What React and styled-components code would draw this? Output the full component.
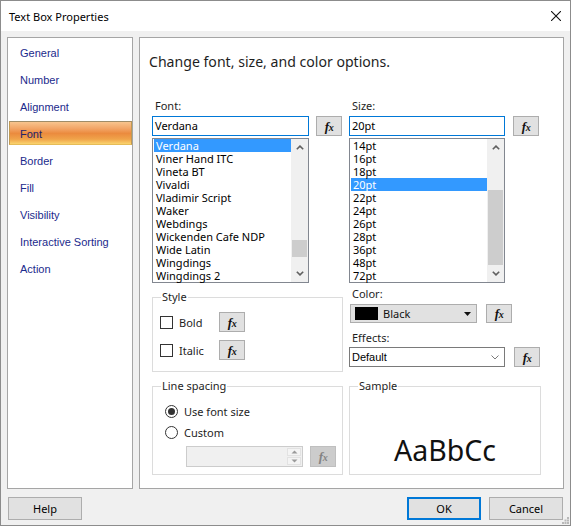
import React from "react"
import styled, { createGlobalStyle, css } from "styled-components"

const UI = `"Noto Sans", "Open Sans", sans-serif`
const CLASSIC = `"Liberation Sans", Arial, sans-serif`

const fontNames = [
  "Verdana",
  "Viner Hand ITC",
  "Vineta BT",
  "Vivaldi",
  "Vladimir Script",
  "Waker",
  "Webdings",
  "Wickenden Cafe NDP",
  "Wide Latin",
  "Wingdings",
  "Wingdings 2",
]

const sizes = ["14pt", "16pt", "18pt", "20pt", "22pt", "24pt", "26pt", "28pt", "36pt", "48pt", "72pt"]

const pages = ["General", "Number", "Alignment", "Font", "Border", "Fill", "Visibility", "Interactive Sorting", "Action"]

const Fx = ({ disabled, height }) => (
  <FxButton $disabled={disabled} $h={height}>
    <FxGlyph>
      f<small>x</small>
    </FxGlyph>
  </FxButton>
)

const Chevron = ({ up }) => (
  <svg width="8" height="5" viewBox="0 0 8 5">
    <path
      d={up ? "M0.8 4.3 L4 1.1 L7.2 4.3" : "M0.8 0.7 L4 3.9 L7.2 0.7"}
      fill="none"
      stroke="#606060"
      strokeWidth="1.6"
    />
  </svg>
)

const ScrollBar = ({ thumbTop, thumbHeight }) => (
  <Scroll>
    <ScrollArrow>
      <Chevron up />
    </ScrollArrow>
    <Track>
      <Thumb $top={thumbTop} $height={thumbHeight} />
    </Track>
    <ScrollArrow>
      <Chevron />
    </ScrollArrow>
  </Scroll>
)

const List = ({ items, selected, width, thumbTop, thumbHeight }) => (
  <ListBox $w={width}>
    <ListItems>
      {items.map((item) => (
        <ListItem key={item} $selected={item === selected}>
          {item}
        </ListItem>
      ))}
    </ListItems>
    <ScrollBar thumbTop={thumbTop} thumbHeight={thumbHeight} />
  </ListBox>
)

const App = () => {
  return (
    <>
      <GlobalStyle />
      <Window>
        <TitleBar>
          <span>Text Box Properties</span>
          <svg width="10" height="10" viewBox="0 0 10 10">
            <path d="M0 0 L10 10 M10 0 L0 10" stroke="#111" strokeWidth="1.1" />
          </svg>
        </TitleBar>
        <Body>
          <Main>
            <Nav>
              {pages.map((page) => (
                <NavItem key={page} $active={page === "Font"}>
                  {page}
                </NavItem>
              ))}
            </Nav>
            <Content>
              <Heading>Change font, size, and color options.</Heading>
              <Columns>
                <Column>
                  <Label>Font:</Label>
                  <FieldRow $gap={7}>
                    <TextBox $w={157}>Verdana</TextBox>
                    <Fx />
                  </FieldRow>
                  <List items={fontNames} selected="Verdana" width={157} thumbTop={84} thumbHeight={17} />

                  <Group $mt={7}>
                    <Legend>Style</Legend>
                    <StyleBody>
                      <CheckRow>
                        <CheckBox />
                        <span>Bold</span>
                        <Fx />
                      </CheckRow>
                      <CheckRow>
                        <CheckBox />
                        <span>Italic</span>
                        <Fx />
                      </CheckRow>
                    </StyleBody>
                  </Group>

                  <Group $mt={7}>
                    <Legend>Line spacing</Legend>
                    <SpacingBody>
                      <RadioRow>
                        <Radio $checked />
                        <span>Use font size</span>
                      </RadioRow>
                      <RadioRow>
                        <Radio />
                        <span>Custom</span>
                      </RadioRow>
                      <SpinRow>
                        <SpinBox>
                          <SpinButtons>
                            <SpinHalf>
                              <svg width="7" height="4" viewBox="0 0 7 4">
                                <path d="M0.5 3.5 L3.5 0.5 L6.5 3.5 Z" fill="#9a9a9a" />
                              </svg>
                            </SpinHalf>
                            <SpinHalf>
                              <svg width="7" height="4" viewBox="0 0 7 4">
                                <path d="M0.5 0.5 L3.5 3.5 L6.5 0.5 Z" fill="#9a9a9a" />
                              </svg>
                            </SpinHalf>
                          </SpinButtons>
                        </SpinBox>
                        <Fx disabled height={21} />
                      </SpinRow>
                    </SpacingBody>
                  </Group>
                </Column>

                <Column>
                  <Label>Size:</Label>
                  <FieldRow $gap={8}>
                    <TextBox $w={156}>20pt</TextBox>
                    <Fx />
                  </FieldRow>
                  <List items={sizes} selected="20pt" width={156} thumbTop={34} thumbHeight={75} />

                  <Label $mt={4}>Color:</Label>
                  <FieldRow $gap={9} $indent={1}>
                    <ColorSelect>
                      <Swatch />
                      <SelectText>Black</SelectText>
                      <svg width="7" height="4" viewBox="0 0 7 4">
                        <path d="M0 0 L7 0 L3.5 4 Z" fill="#111" />
                      </svg>
                    </ColorSelect>
                    <Fx height={19} />
                  </FieldRow>

                  <Label $mt={8} $mb={2}>Effects:</Label>
                  <FieldRow $gap={9}>
                    <ComboBox>
                      <ComboText>Default</ComboText>
                      <svg width="8" height="5" viewBox="0 0 8 5">
                        <path d="M0.5 0.5 L4 4 L7.5 0.5" fill="none" stroke="#7a7a7a" strokeWidth="1" />
                      </svg>
                    </ComboBox>
                    <Fx />
                  </FieldRow>

                  <Group $mt={12}>
                    <Legend>Sample</Legend>
                    <SampleBody>
                      <SampleText>AaBbCc</SampleText>
                    </SampleBody>
                  </Group>
                </Column>
              </Columns>
            </Content>
          </Main>
          <Footer>
            <Button>Help</Button>
            <Spacer />
            <Button $default>OK</Button>
            <Button>Cancel</Button>
          </Footer>
        </Body>
        <Grip width="7" height="7" viewBox="0 0 7 7">
          <rect x="5" y="0" width="2" height="2" fill="#b8b8b8" />
          <rect x="2.5" y="2.5" width="2" height="2" fill="#b8b8b8" />
          <rect x="5" y="2.5" width="2" height="2" fill="#b8b8b8" />
          <rect x="0" y="5" width="2" height="2" fill="#b8b8b8" />
          <rect x="2.5" y="5" width="2" height="2" fill="#b8b8b8" />
          <rect x="5" y="5" width="2" height="2" fill="#b8b8b8" />
        </Grip>
      </Window>
    </>
  )
}

const GlobalStyle = createGlobalStyle`
  html, body {
    margin: 0;
    padding: 0;
    background: #ffffff;
  }

  body {
    font-family: ${UI};
    font-size: 11px;
    color: #000;
  }

  *, *::before, *::after {
    box-sizing: border-box;
  }
`

const Window = styled.div`
  position: relative;
  width: 571px;
  height: 526px;
  border: 1px solid #8c8c8c;
  background: #f0f0f0;
  display: flex;
  flex-direction: column;
`

const TitleBar = styled.div`
  height: 30px;
  flex: none;
  background: #fff;
  display: flex;
  align-items: center;
  justify-content: space-between;
  padding: 0 9px 0 8px;
  font-size: 11px;
  color: #000;
`

const Body = styled.div`
  flex: 1;
  display: flex;
  flex-direction: column;
  padding: 6px 6px 0;
`

const Main = styled.div`
  height: 452px;
  display: flex;
  gap: 6px;
`

const Nav = styled.ul`
  width: 126px;
  margin: 0;
  padding: 2px 0 0;
  list-style: none;
  background: #fff;
  border: 1px solid #a5a5a5;
  font-family: ${CLASSIC};
  font-size: 11px;
`

const NavItem = styled.li`
  height: 24px;
  line-height: 22px;
  margin: 0 0 3px 1px;
  padding: 1px 0 0 10px;
  border: 1px solid transparent;
  color: #1b2a8c;

  ${(p) =>
    p.$active &&
    css`
      color: #23236a;
      border-color: #a08c68 #c09a52 #e6bc58;
      background: linear-gradient(
        to bottom,
        #f8c48e 0%,
        #f2a466 30%,
        #eb8b3e 52%,
        #f0a34a 78%,
        #fad46e 100%
      );
    `}
`

const Content = styled.div`
  flex: 1;
  background: #fff;
  border: 1px solid #a5a5a5;
  padding-top: 14px;
`

const Heading = styled.div`
  padding-left: 9px;
  font-size: 14.1px;
  line-height: 20px;
  color: #1e1e1e;
`

const Columns = styled.div`
  display: grid;
  grid-template-columns: 191px 192px;
  column-gap: 6px;
  padding: 27px 0 0 12px;
`

const Column = styled.div`
  display: flex;
  flex-direction: column;
`

const Label = styled.div`
  line-height: 14px;
  margin-top: ${(p) => p.$mt || 0}px;
  margin-bottom: ${(p) => (p.$mb === undefined ? 3 : p.$mb)}px;
  padding-left: 3px;
  color: #1e1e1e;
`

const FieldRow = styled.div`
  display: flex;
  align-items: center;
  gap: ${(p) => p.$gap}px;
  margin-left: ${(p) => p.$indent || 0}px;
`

const TextBox = styled.div`
  width: ${(p) => p.$w}px;
  height: 20px;
  border: 1px solid #0078d7;
  padding-left: 2px;
  line-height: 18px;
  background: #fff;
`

const FxButton = styled.div`
  width: 26px;
  height: ${(p) => p.$h || 20}px;
  flex: none;
  display: flex;
  align-items: center;
  justify-content: center;
  background: ${(p) => (p.$disabled ? "#cccccc" : "#e1e1e1")};
  border: 1px solid ${(p) => (p.$disabled ? "#bfbfbf" : "#adadad")};
  color: ${(p) => (p.$disabled ? "#838383" : "#111")};
`

const FxGlyph = styled.span`
  font-family: "Liberation Serif", "DejaVu Serif", serif;
  font-style: italic;
  font-weight: bold;
  font-size: 13px;
  line-height: 1;
  letter-spacing: -0.5px;

  small {
    font-size: 10px;
  }
`

const ListBox = styled.div`
  width: ${(p) => p.$w}px;
  height: 145px;
  margin-top: 2px;
  display: flex;
  border: 1px solid #828790;
  background: #fff;
`

const ListItems = styled.div`
  flex: 1;
  padding-left: 1px;
`

const ListItem = styled.div`
  height: 13px;
  line-height: 13px;
  padding-left: 2px;
  white-space: nowrap;
  background: ${(p) => (p.$selected ? "#3399ff" : "transparent")};
  color: ${(p) => (p.$selected ? "#fff" : "#000")};
`

const Scroll = styled.div`
  width: 17px;
  display: flex;
  flex-direction: column;
  background: #f0f0f0;
`

const ScrollArrow = styled.div`
  height: 17px;
  display: flex;
  align-items: center;
  justify-content: center;
`

const Track = styled.div`
  flex: 1;
  display: flex;
  flex-direction: column;
  align-items: center;
`

const Thumb = styled.div`
  width: 15px;
  margin-top: ${(p) => p.$top}px;
  height: ${(p) => p.$height}px;
  background: #cdcdcd;
`

const Group = styled.fieldset`
  margin: ${(p) => p.$mt}px 0 0;
  padding: 0;
  min-width: 0;
  border: 1px solid #dcdcdc;
`

const Legend = styled.legend`
  margin-left: 8px;
  padding: 0 1px;
  line-height: 14px;
  color: #1e1e1e;
`

const StyleBody = styled.div`
  display: flex;
  flex-direction: column;
  gap: 8px;
  padding: 8px 0 11px 7px;
`

const CheckRow = styled.div`
  display: grid;
  grid-template-columns: 13px 34px 26px;
  column-gap: 6px;
  align-items: center;
  color: #1e1e1e;
`

const CheckBox = styled.div`
  width: 13px;
  height: 13px;
  border: 1px solid #333;
  background: #fff;
`

const SpacingBody = styled.div`
  display: flex;
  flex-direction: column;
  gap: 5px;
  padding: 10px 0 7px 12px;
`

const RadioRow = styled.div`
  height: 16px;
  display: flex;
  align-items: center;
  gap: 6px;
  color: #1e1e1e;
`

const Radio = styled.div`
  width: 13px;
  height: 13px;
  border: 1px solid #333;
  border-radius: 50%;
  background: #fff;
  display: flex;
  align-items: center;
  justify-content: center;

  ${(p) =>
    p.$checked &&
    css`
      &::after {
        content: "";
        width: 7px;
        height: 7px;
        border-radius: 50%;
        background: #333;
      }
    `}
`

const SpinRow = styled.div`
  display: flex;
  gap: 7px;
  margin: 1px 0 0 21px;
`

const SpinBox = styled.div`
  width: 117px;
  height: 21px;
  border: 1px solid #cccccc;
  background: #f0f0f0;
  display: flex;
  justify-content: flex-end;
  padding: 1px;
`

const SpinButtons = styled.div`
  width: 14px;
  display: flex;
  flex-direction: column;
  gap: 1px;
`

const SpinHalf = styled.div`
  flex: 1;
  display: flex;
  align-items: center;
  justify-content: center;
  background: #f4f4f4;
  border: 1px solid #e2e2e2;
`

const ColorSelect = styled.div`
  width: 127px;
  height: 19px;
  display: flex;
  align-items: center;
  padding: 0 5px 0 4px;
  background: #e1e1e1;
  border: 1px solid #adadad;
`

const Swatch = styled.div`
  width: 23px;
  height: 13px;
  background: #000;
  margin-right: 5px;
`

const SelectText = styled.span`
  flex: 1;
  color: #111;
`

const ComboBox = styled.div`
  width: 156px;
  height: 20px;
  display: flex;
  align-items: center;
  padding: 0 5px 0 2px;
  background: #fff;
  border: 1px solid #7a7a7a;
`

const ComboText = styled.span`
  flex: 1;
  font-family: ${CLASSIC};
  font-size: 11px;
  color: #000;
`

const SampleBody = styled.div`
  height: 81px;
  display: flex;
  align-items: flex-end;
  justify-content: center;
  padding-bottom: 8px;
`

const SampleText = styled.div`
  font-size: 28.5px;
  line-height: 32px;
  color: #111;
`

const Footer = styled.div`
  display: flex;
  gap: 8px;
  padding: 8px 1px 0;
`

const Spacer = styled.div`
  flex: 1;
`

const Button = styled.div`
  width: 74px;
  height: 23px;
  display: flex;
  align-items: center;
  justify-content: center;
  background: #e1e1e1;
  border: ${(p) => (p.$default ? "2px solid #0078d7" : "1px solid #adadad")};
  color: #000;
`

const Grip = styled.svg`
  position: absolute;
  right: 1px;
  bottom: 1px;
`

export default App
